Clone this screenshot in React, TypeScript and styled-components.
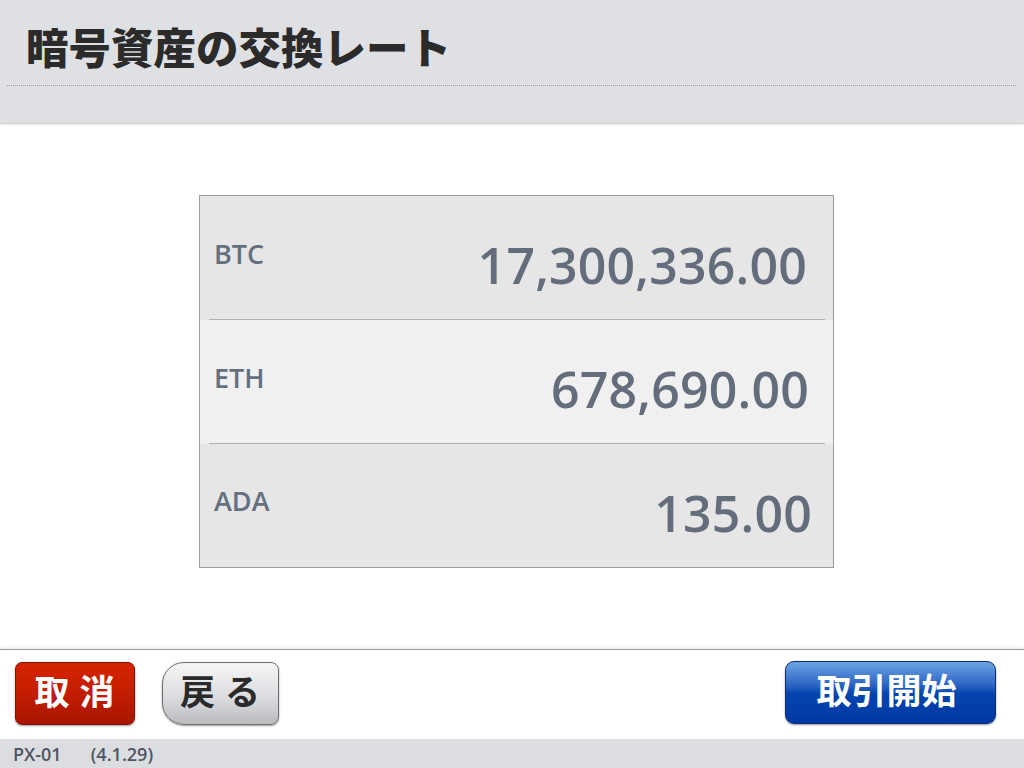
import React from 'react';
import styled, { createGlobalStyle } from 'styled-components';

const GlobalStyle = createGlobalStyle`
  html, body {
    margin: 0;
    padding: 0;
    width: 1024px;
    height: 768px;
    overflow: hidden;
    background: #ffffff;
    font-family: "Open Sans", "Noto Sans CJK JP", sans-serif;
  }
`;

type Rate = { code: string; value: string; shift: number };

const rates: Rate[] = [
  { code: 'BTC', value: '17,300,336.00', shift: 26 },
  { code: 'ETH', value: '678,690.00', shift: 24 },
  { code: 'ADA', value: '135.00', shift: 21 },
];

const App = () => {
  return (
    <Screen>
      <GlobalStyle />
      <Header>
        <Title>暗号資産の交換レート</Title>
        <DottedRule />
      </Header>
      <Main>
        <RateTable>
          {rates.map((r, i) => (
            <RateRow key={r.code} alt={i % 2 === 1} last={i === rates.length - 1}>
              <Code>{r.code}</Code>
              <Value shift={r.shift}>{r.value}</Value>
            </RateRow>
          ))}
        </RateTable>
      </Main>
      <ButtonBar>
        <LeftGroup>
          <CancelButton>取 消</CancelButton>
          <BackButton>戻 る</BackButton>
        </LeftGroup>
        <StartButton>取引開始</StartButton>
      </ButtonBar>
      <StatusBar>
        <span>PX-01</span>
        <span>(4.1.29)</span>
      </StatusBar>
    </Screen>
  );
};

export default App;

const Screen = styled.div`
  width: 1024px;
  height: 768px;
  display: flex;
  flex-direction: column;
`;

const Header = styled.div`
  height: 123px;
  flex-shrink: 0;
  background: #dee0e4;
  box-shadow: 0 1px 2px rgba(0, 0, 0, 0.25);
  position: relative;
  z-index: 1;
  padding-top: 20px;
  box-sizing: border-box;
`;

const Title = styled.h1`
  margin: 0 0 0 26px;
  height: 52px;
  line-height: 52px;
  font-family: "Noto Sans CJK JP", sans-serif;
  font-weight: 900;
  font-size: 42.5px;
  color: #2b2b2b;
  letter-spacing: 0;
`;

const DottedRule = styled.div`
  margin: 13px 8px 0 7px;
  border-top: 1px dotted #9a9a9c;
`;

const Main = styled.div`
  flex: 1;
  display: flex;
  justify-content: center;
  align-items: flex-start;
  padding-top: 72px;
  box-sizing: border-box;
`;

const RateTable = styled.div`
  width: 635px;
  border: 1px solid #9c9c9c;
  display: flex;
  flex-direction: column;
  margin-left: 9px;
  box-sizing: border-box;
`;

const RateRow = styled.div<{ alt: boolean; last: boolean }>`
  height: ${(p) => (p.last ? 123 : 124)}px;
  flex-shrink: 0;
  background: ${(p) => (p.alt ? '#f0f0f0' : '#e6e6e6')};
  display: flex;
  align-items: center;
  justify-content: space-between;
  padding: 0 0 0 14px;
  position: relative;
  &::after {
    content: '';
    display: ${(p) => (p.last ? 'none' : 'block')};
    position: absolute;
    left: 9px;
    right: 8px;
    bottom: 0;
    border-bottom: 1px solid #b0b0b0;
  }
`;

const Code = styled.span`
  font-size: 27px;
  font-weight: 600;
  color: #647080;
  margin-top: -10px;
`;

const Value = styled.span<{ shift: number }>`
  font-size: 50px;
  font-weight: 600;
  color: #646d7b;
  margin-right: ${(p) => p.shift}px;
  margin-top: 14px;
  letter-spacing: 0.2px;
`;

const ButtonBar = styled.div`
  height: 90px;
  flex-shrink: 0;
  border-top: 1px solid #9a9a9a;
  box-shadow: 0 -2px 3px rgba(0, 0, 0, 0.08);
  display: flex;
  justify-content: space-between;
  align-items: flex-start;
  padding: 12px 28px 0 15px;
  box-sizing: border-box;
`;

const LeftGroup = styled.div`
  display: flex;
  gap: 27px;
`;

const BaseButton = styled.button`
  height: 63px;
  font-family: "Noto Sans CJK JP", sans-serif;
  font-weight: 700;
  font-size: 35px;
  line-height: 1;
  padding: 0 0 8px;
  cursor: pointer;
  box-shadow: 0 1px 2px rgba(0, 0, 0, 0.4);
`;

const CancelButton = styled(BaseButton)`
  width: 120px;
  border-radius: 7px;
  color: #ffffff;
  border: 1px solid #7a1404;
  background: linear-gradient(#d52400 0%, #c21d00 50%, #a81600 100%);
  letter-spacing: 1px;
`;

const BackButton = styled(BaseButton)`
  width: 117px;
  border-radius: 22px 8px 8px 22px;
  color: #2a2a2a;
  border: 1px solid #6e6e6e;
  background: linear-gradient(#f5f6f7 0%, #dcdde0 55%, #b9bbbf 100%);
  letter-spacing: 1px;
`;

const StartButton = styled(BaseButton)`
  width: 211px;
  border-radius: 9px;
  color: #ffffff;
  border: 1px solid #0d2d7a;
  margin-top: -1px;
  padding-right: 8px;
  background: linear-gradient(#6ea4e4 0%, #2c64c4 38%, #0444ae 52%, #0038a4 100%);
`;

const StatusBar = styled.div`
  height: 29px;
  flex-shrink: 0;
  background: #dcdde0;
  display: flex;
  align-items: center;
  gap: 29px;
  padding-left: 13px;
  font-size: 18px;
  font-weight: 600;
  color: #4e5560;
`;
